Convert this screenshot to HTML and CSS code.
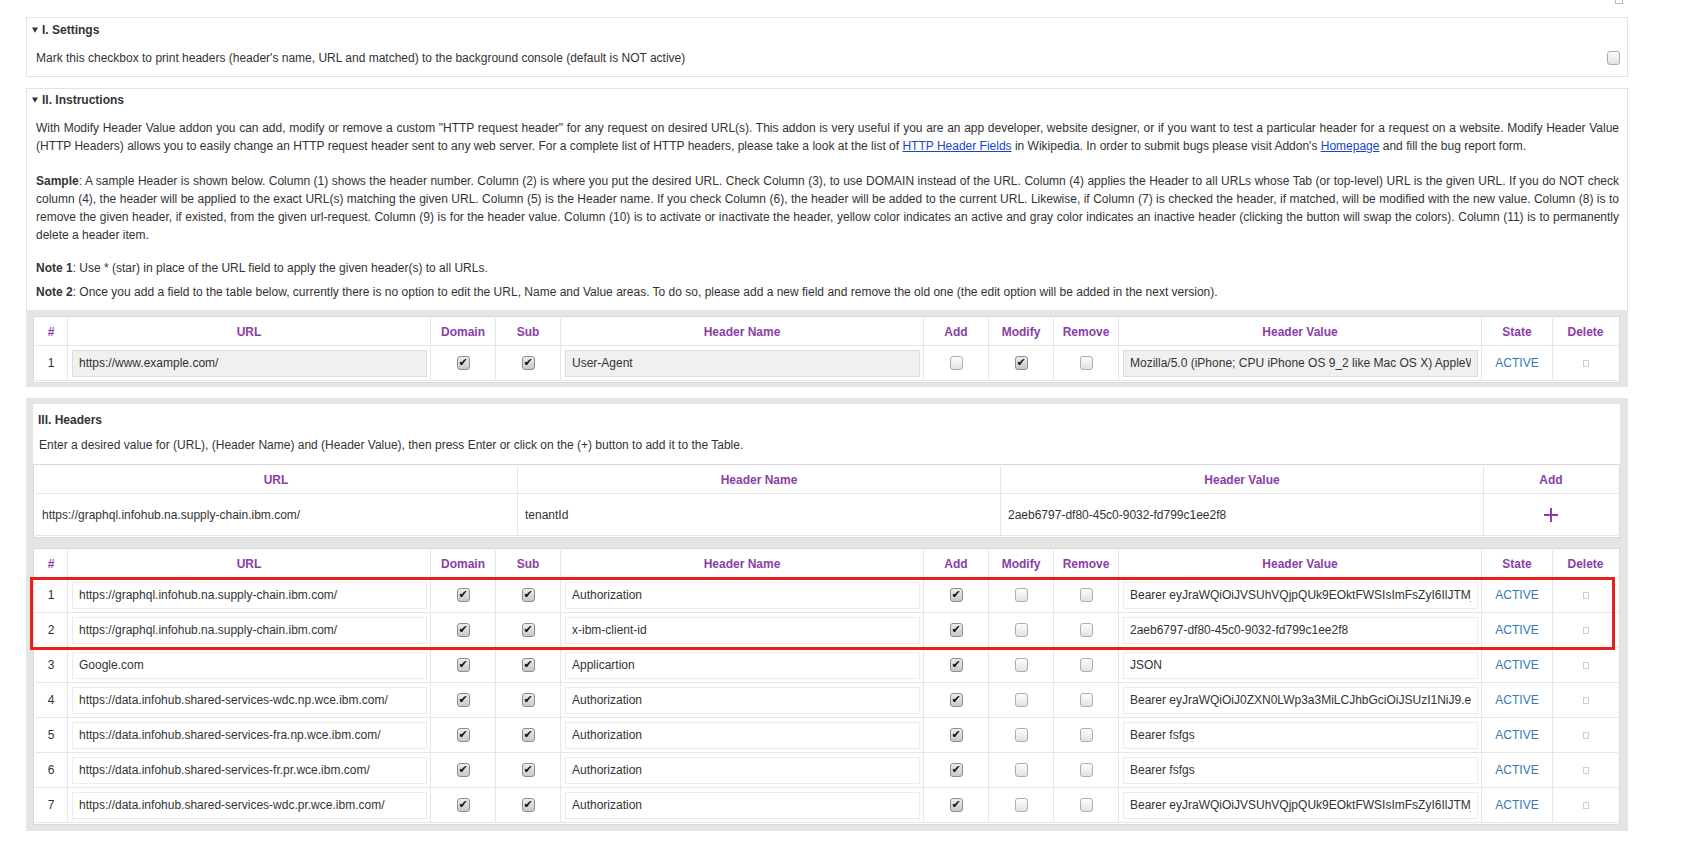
FILE: index.html
```html
<!DOCTYPE html>
<html lang="en">
<head>
<meta charset="utf-8">
<title>Modify Header Value</title>
<link rel="stylesheet" href="styles.css">
</head>
<body>
<div class="page">
  <div class="topbar"><span class="mini-icon"></span></div>

  <section class="box settings">
    <div class="summary"><svg class="tri" viewBox="0 0 8 7"><polygon points="0,0 8,0 4,7" fill="#333"/></svg><span>I. Settings</span></div>
    <div class="setting-row">
      <span>Mark this checkbox to print headers (header's name, URL and matched) to the background console (default is NOT active)</span>
      <input type="checkbox" class="cb">
    </div>
  </section>

  <section class="box instr">
    <div class="summary"><svg class="tri" viewBox="0 0 8 7"><polygon points="0,0 8,0 4,7" fill="#333"/></svg><span>II. Instructions</span></div>
    <div class="instr-text">
      <p class="p1">With Modify Header Value addon you can add, modify or remove a custom "HTTP request header" for any request on desired URL(s). This addon is very useful if you are an app developer, website designer, or if you want to test a particular header for a request on a website. Modify Header Value (HTTP Headers) allows you to easily change an HTTP request header sent to any web server. For a complete list of HTTP headers, please take a look at the list of <a href="#">HTTP Header Fields</a> in Wikipedia. In order to submit bugs please visit Addon's <a href="#">Homepage</a> and fill the bug report form.</p>
      <p class="p2"><b>Sample</b>: A sample Header is shown below. Column (1) shows the header number. Column (2) is where you put the desired URL. Check Column (3), to use DOMAIN instead of the URL. Column (4) applies the Header to all URLs whose Tab (or top-level) URL is the given URL. If you do NOT check column (4), the header will be applied to the exact URL(s) matching the given URL. Column (5) is the Header name. If you check Column (6), the header will be added to the current URL. Likewise, if Column (7) is checked the header, if matched, will be modified with the new value. Column (8) is to remove the given header, if existed, from the given url-request. Column (9) is for the header value. Column (10) is to activate or inactivate the header, yellow color indicates an active and gray color indicates an inactive header (clicking the button will swap the colors). Column (11) is to permanently delete a header item.</p>
      <p class="n1"><b>Note 1</b>: Use * (star) in place of the URL field to apply the given header(s) to all URLs.</p>
      <p class="n2"><b>Note 2</b>: Once you add a field to the table below, currently there is no option to edit the URL, Name and Value areas. To do so, please add a new field and remove the old one (the edit option will be added in the next version).</p>
    </div>
    <div class="grayframe">
      <table class="grid sample">
        <colgroup><col class="c-num"><col class="c-url"><col class="c-sm"><col class="c-sm"><col class="c-name"><col class="c-sm"><col class="c-sm"><col class="c-sm"><col class="c-val"><col class="c-state"><col class="c-sm"></colgroup>
        <thead><tr><th>#</th><th>URL</th><th>Domain</th><th>Sub</th><th>Header Name</th><th>Add</th><th>Modify</th><th>Remove</th><th>Header Value</th><th>State</th><th>Delete</th></tr></thead>
        <tbody>
          <tr><td>1</td><td><input class="fld" type="text" value="https://www.example.com/"></td><td><input type="checkbox" class="cb" checked></td><td><input type="checkbox" class="cb" checked></td><td><input class="fld" type="text" value="User-Agent"></td><td><input type="checkbox" class="cb"></td><td><input type="checkbox" class="cb" checked></td><td><input type="checkbox" class="cb"></td><td><input class="fld" type="text" value="Mozilla/5.0 (iPhone; CPU iPhone OS 9_2 like Mac OS X) AppleWebKit/601.1.46 (KHTML, like Gecko) Version/9.0 Mobile/13C75 Safari/601.1"></td><td class="state">ACTIVE</td><td><span class="del"></span></td></tr>
        </tbody>
      </table>
    </div>
  </section>

  <section class="headers">
    <div class="panel">
      <div class="h-title">III. Headers</div>
      <div class="h-desc">Enter a desired value for (URL), (Header Name) and (Header Value), then press Enter or click on the (+) button to add it to the Table.</div>
      <table class="grid input-grid">
        <colgroup><col class="i-col"><col class="i-col"><col class="i-col"><col class="i-add"></colgroup>
        <thead><tr><th>URL</th><th>Header Name</th><th>Header Value</th><th>Add</th></tr></thead>
        <tbody>
          <tr>
            <td><input class="plain" type="text" value="https://graphql.infohub.na.supply-chain.ibm.com/"></td>
            <td><input class="plain" type="text" value="tenantId"></td>
            <td><input class="plain" type="text" value="2aeb6797-df80-45c0-9032-fd799c1ee2f8"></td>
            <td><svg class="plus" viewBox="0 0 14 14"><path d="M7 0V14M0 7H14" stroke="#8a3ea8" stroke-width="2"/></svg></td>
          </tr>
        </tbody>
      </table>
    </div>
    <table class="grid main-grid">
      <colgroup><col class="c-num"><col class="c-url"><col class="c-sm"><col class="c-sm"><col class="c-name"><col class="c-sm"><col class="c-sm"><col class="c-sm"><col class="c-val"><col class="c-state"><col class="c-sm"></colgroup>
      <thead><tr><th>#</th><th>URL</th><th>Domain</th><th>Sub</th><th>Header Name</th><th>Add</th><th>Modify</th><th>Remove</th><th>Header Value</th><th>State</th><th>Delete</th></tr></thead>
      <tbody>
        <tr><td>1</td><td><input class="fld" type="text" value="https://graphql.infohub.na.supply-chain.ibm.com/"></td><td><input type="checkbox" class="cb" checked></td><td><input type="checkbox" class="cb" checked></td><td><input class="fld" type="text" value="Authorization"></td><td><input type="checkbox" class="cb" checked></td><td><input type="checkbox" class="cb"></td><td><input type="checkbox" class="cb"></td><td><input class="fld" type="text" value="Bearer eyJraWQiOiJVSUhVQjpQUk9EOktFWSIsImFsZyI6IlJTMjU2In0.eyJzdWIiOiJ1c2VyIn0"></td><td class="state">ACTIVE</td><td><span class="del"></span></td></tr>
        <tr><td>2</td><td><input class="fld" type="text" value="https://graphql.infohub.na.supply-chain.ibm.com/"></td><td><input type="checkbox" class="cb" checked></td><td><input type="checkbox" class="cb" checked></td><td><input class="fld" type="text" value="x-ibm-client-id"></td><td><input type="checkbox" class="cb" checked></td><td><input type="checkbox" class="cb"></td><td><input type="checkbox" class="cb"></td><td><input class="fld" type="text" value="2aeb6797-df80-45c0-9032-fd799c1ee2f8"></td><td class="state">ACTIVE</td><td><span class="del"></span></td></tr>
        <tr><td>3</td><td><input class="fld" type="text" value="Google.com"></td><td><input type="checkbox" class="cb" checked></td><td><input type="checkbox" class="cb" checked></td><td><input class="fld" type="text" value="Applicartion"></td><td><input type="checkbox" class="cb" checked></td><td><input type="checkbox" class="cb"></td><td><input type="checkbox" class="cb"></td><td><input class="fld" type="text" value="JSON"></td><td class="state">ACTIVE</td><td><span class="del"></span></td></tr>
        <tr><td>4</td><td><input class="fld" type="text" value="https://data.infohub.shared-services-wdc.np.wce.ibm.com/"></td><td><input type="checkbox" class="cb" checked></td><td><input type="checkbox" class="cb" checked></td><td><input class="fld" type="text" value="Authorization"></td><td><input type="checkbox" class="cb" checked></td><td><input type="checkbox" class="cb"></td><td><input type="checkbox" class="cb"></td><td><input class="fld" type="text" value="Bearer eyJraWQiOiJ0ZXN0LWp3a3MiLCJhbGciOiJSUzI1NiJ9.eyJzdWIiOiJ0ZXN0In0"></td><td class="state">ACTIVE</td><td><span class="del"></span></td></tr>
        <tr><td>5</td><td><input class="fld" type="text" value="https://data.infohub.shared-services-fra.np.wce.ibm.com/"></td><td><input type="checkbox" class="cb" checked></td><td><input type="checkbox" class="cb" checked></td><td><input class="fld" type="text" value="Authorization"></td><td><input type="checkbox" class="cb" checked></td><td><input type="checkbox" class="cb"></td><td><input type="checkbox" class="cb"></td><td><input class="fld" type="text" value="Bearer fsfgs"></td><td class="state">ACTIVE</td><td><span class="del"></span></td></tr>
        <tr><td>6</td><td><input class="fld" type="text" value="https://data.infohub.shared-services-fr.pr.wce.ibm.com/"></td><td><input type="checkbox" class="cb" checked></td><td><input type="checkbox" class="cb" checked></td><td><input class="fld" type="text" value="Authorization"></td><td><input type="checkbox" class="cb" checked></td><td><input type="checkbox" class="cb"></td><td><input type="checkbox" class="cb"></td><td><input class="fld" type="text" value="Bearer fsfgs"></td><td class="state">ACTIVE</td><td><span class="del"></span></td></tr>
        <tr><td>7</td><td><input class="fld" type="text" value="https://data.infohub.shared-services-wdc.pr.wce.ibm.com/"></td><td><input type="checkbox" class="cb" checked></td><td><input type="checkbox" class="cb" checked></td><td><input class="fld" type="text" value="Authorization"></td><td><input type="checkbox" class="cb" checked></td><td><input type="checkbox" class="cb"></td><td><input type="checkbox" class="cb"></td><td><input class="fld" type="text" value="Bearer eyJraWQiOiJVSUhVQjpQUk9EOktFWSIsImFsZyI6IlJTMjU2In0.eyJzdWIiOiJ1c2VyIn0"></td><td class="state">ACTIVE</td><td><span class="del"></span></td></tr>
      </tbody>
    </table>
  </section>
</div>
<div class="redbox"></div>
</body>
</html>
```

FILE: styles.css
```css
* { box-sizing: border-box; }

body {
  margin: 0;
  font-family: "Liberation Sans", Arial, Helvetica, sans-serif;
  font-size: 12px;
  color: #333;
  background: #fff;
}

.page {
  margin-left: 26px;
  width: 1602px;
  padding-bottom: 38px;
}

.topbar {
  height: 17px;
  display: flex;
  justify-content: flex-end;
  padding-right: 5px;
}

.mini-icon {
  width: 8px;
  height: 4px;
  border: 1px solid #b8b8b8;
  border-top: none;
}

.box {
  border: 1px solid #e2e2e2;
}

.summary {
  display: flex;
  align-items: center;
  gap: 4px;
  padding-left: 5px;
  line-height: 18px;
  font-weight: bold;
}

.tri {
  width: 6px;
  height: 6px;
}

.settings {
  padding: 3px 0 9px;
}

.setting-row {
  margin-top: 10px;
  display: flex;
  justify-content: space-between;
  align-items: center;
  line-height: 18px;
  padding: 0 7px 0 9px;
}

.instr {
  margin-top: 11px;
  padding-top: 2px;
}

.instr-text {
  padding: 0 8px 0 9px;
  line-height: 18px;
  text-align: justify;
}

.instr-text p { margin: 0; }
.instr-text .p1 { margin-top: 10px; }
.instr-text .p2 { margin-top: 17px; }
.instr-text .n1 { margin-top: 15px; }
.instr-text .n2 { margin-top: 6px; }

.instr-text a {
  color: #1846c8;
  text-decoration: underline;
}

.grayframe {
  background: #e5e5e5;
  margin: 9px -1px -1px -1px;
  padding: 6px 8px 4px 7px;
}

.headers {
  margin-top: 11px;
  background: #e5e5e5;
  padding: 6px 8px 6px 7px;
}

.panel {
  background: #fff;
  padding-top: 7px;
}

.h-title {
  font-weight: bold;
  line-height: 18px;
  padding-left: 5px;
}

.h-desc {
  margin-top: 7px;
  line-height: 18px;
  padding-left: 6px;
}

.input-grid { margin-top: 10px; }
.main-grid { margin-top: 10px; }

/* tables */
.grid {
  width: 100%;
  table-layout: fixed;
  border-collapse: separate;
  border-spacing: 0;
  border: 1px solid #dadada;
  padding: 1px;
  background: #fff;
}

.grid th,
.grid td {
  padding: 0;
  border-right: 1px solid #e6e6e6;
  border-bottom: 1px solid #e6e6e6;
  text-align: center;
  vertical-align: middle;
  white-space: nowrap;
  overflow: hidden;
}

.grid tr > :last-child { border-right: none; }

.grid th {
  height: 28px;
  color: #8a3ea8;
  font-weight: bold;
}

.grid td { height: 35px; }
.input-grid td { height: 42px; }

.c-num { width: 33px; }
.c-url { width: 363px; }
.c-sm { width: 65px; }
.c-name { width: 363px; }
.c-val { width: 363px; }
.c-state { width: 71px; }
.i-col { width: 483px; }
.i-add { width: 134px; }

.fld {
  display: block;
  width: calc(100% - 7px);
  margin-left: 4px;
  height: 27px;
  padding: 0 6px;
  border: 1px solid #ececec;
  background: #fff;
  font: inherit;
  color: #333;
  outline: none;
}

.sample .fld {
  background: #f0f0f0;
  border-color: #dcdcdc;
}

.plain {
  display: block;
  width: 100%;
  border: none;
  padding: 0 7px;
  font: inherit;
  color: #333;
  background: transparent;
  outline: none;
}

.plus {
  width: 14px;
  height: 14px;
  vertical-align: middle;
}

.state { color: #337ab7; }

.del {
  display: inline-block;
  width: 6px;
  height: 7px;
  border: 1px solid #cfcfcf;
  vertical-align: middle;
}

/* checkboxes */
.cb {
  -webkit-appearance: none;
  appearance: none;
  display: inline-block;
  position: relative;
  width: 13px;
  height: 14px;
  margin: 0;
  border: 1px solid #adadad;
  border-radius: 3px;
  background: linear-gradient(#fdfdfd, #e2e2e2);
  vertical-align: middle;
}

.cb:checked {
  border-color: #8e8e8e;
  background: linear-gradient(#ececec, #c8c8c8);
}

.cb:checked::after {
  content: "\2714";
  position: absolute;
  left: 1px;
  top: 0;
  font: 11px/12px "DejaVu Sans", sans-serif;
  color: #111;
}

/* annotation */
.redbox {
  position: absolute;
  left: 30px;
  top: 577px;
  width: 1585px;
  height: 73px;
  border: 3px solid #e8201c;
  pointer-events: none;
}
```
